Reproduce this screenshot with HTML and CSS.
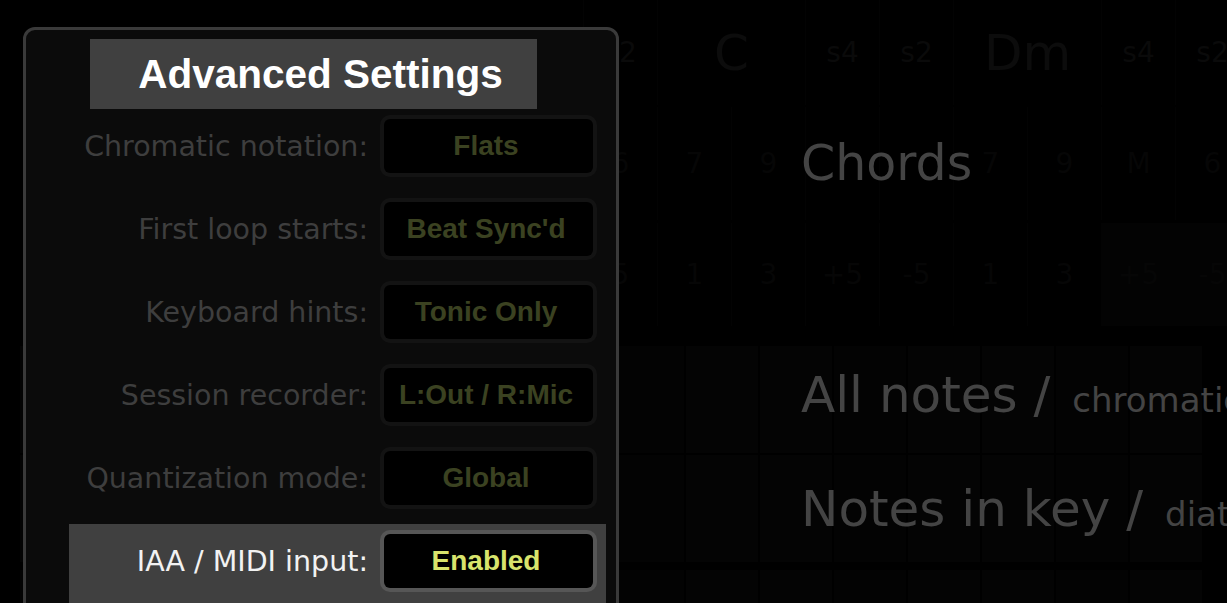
FILE: index.html
```html
<!DOCTYPE html>
<html lang="en">
<head>
  <meta charset="UTF-8">
  <title>Advanced Settings</title>
  <link rel="stylesheet" href="styles.css">
</head>
<body>
  <div class="board">
    <div class="row row-top">
      <div class="chord-cells">
        <span class="cell">s2</span>
        <span class="cell wide">C</span>
        <span class="cell">s4</span>
        <span class="cell">s2</span>
        <span class="cell wide">Dm</span>
        <span class="cell">s4</span>
        <span class="cell">s2</span>
      </div>
    </div>
    <div class="row row-mid">
      <div class="chord-cells">
        <span class="cell">6</span>
        <span class="cell">7</span>
        <span class="cell">9</span>
        <span class="cell"></span>
        <span class="cell"></span>
        <span class="cell">7</span>
        <span class="cell">9</span>
        <span class="cell">M</span>
        <span class="cell">6</span>
      </div>
      <div class="row-title">Chords</div>
    </div>
    <div class="row row-low">
      <div class="chord-cells">
        <span class="cell">5</span>
        <span class="cell">1</span>
        <span class="cell">3</span>
        <span class="cell">+5</span>
        <span class="cell">-5</span>
        <span class="cell">1</span>
        <span class="cell">3</span>
        <span class="cell lit">+5</span>
        <span class="cell lit">-5</span>
      </div>
    </div>

    <div class="row row-notes first">
      <div class="note-cells">
        <span></span><span></span><span></span><span></span><span></span><span></span><span></span><span></span><span></span><span></span><span></span><span></span><span></span><span></span><span></span><span></span>
      </div>
      <div class="row-title">All notes /<span class="sub">chromatic</span></div>
    </div>
    <div class="row row-notes">
      <div class="note-cells">
        <span></span><span></span><span></span><span></span><span></span><span></span><span></span><span></span><span></span><span></span><span></span><span></span><span></span><span></span><span></span><span></span>
      </div>
      <div class="row-title">Notes in key /<span class="sub">diatonic</span></div>
    </div>
    <div class="row row-notes last">
      <div class="note-cells">
        <span></span><span></span><span></span><span></span><span></span><span></span><span></span><span></span><span></span><span></span><span></span><span></span><span></span><span></span><span></span><span></span>
      </div>
      <div class="row-title">Notes in scale /<span class="sub">modal</span></div>
    </div>
  </div>

  <div class="settings">
    <div class="settings-title">Advanced Settings</div>

    <div class="setting">
      <span class="setting-label">Chromatic notation:</span>
      <span class="setting-value">Flats</span>
    </div>
    <div class="setting">
      <span class="setting-label">First loop starts:</span>
      <span class="setting-value">Beat Sync'd</span>
    </div>
    <div class="setting">
      <span class="setting-label">Keyboard hints:</span>
      <span class="setting-value">Tonic Only</span>
    </div>
    <div class="setting">
      <span class="setting-label">Session recorder:</span>
      <span class="setting-value">L:Out / R:Mic</span>
    </div>
    <div class="setting">
      <span class="setting-label">Quantization mode:</span>
      <span class="setting-value">Global</span>
    </div>
    <div class="setting active">
      <span class="setting-label">IAA / MIDI input:</span>
      <span class="setting-value">Enabled</span>
    </div>
  </div>
</body>
</html>
```

FILE: styles.css
```css
* { box-sizing: border-box; margin: 0; padding: 0; }
body {
  width: 1227px;
  height: 603px;
  overflow: hidden;
  background: #000;
  font-family: 'DejaVu Sans', sans-serif;
  position: relative;
}

/* background chord board, dimmed behind the panel */
.board {
  display: flex;
  flex-direction: column;
  gap: 2px;
}
.row {
  display: grid;
  align-items: center;
}
.row > * { grid-area: 1 / 1; }
.row-top { height: 105px; }
.row-mid { height: 113px; }
.row-low { height: 103px; margin-top: 1px; }
.row-notes { height: 107px; }
.row-notes.first { margin-top: 18px; }
.row-notes.last { margin-top: 6px; }

.chord-cells {
  display: flex;
  height: 100%;
  padding-left: 583px;
}
.cell {
  width: 74px;
  flex-shrink: 0;
  display: flex;
  align-items: center;
  justify-content: center;
  border-left: 1px solid #030303;
  color: #0a0a0a;
  font-size: 28px;
}
.cell.wide { width: 148px; font-size: 50px; color: #0c0c0c; }
.row-mid .cell, .row-low .cell { color: #060606; }
.cell.lit { background: #030303; }

.note-cells {
  display: flex;
  height: 100%;
  gap: 2px;
  padding-left: 20px;
}
.note-cells span {
  width: 72px;
  flex-shrink: 0;
  background: #040404;
}
.note-cells span:nth-child(3n) { background: #030303; }

.row-title {
  padding-left: 801px;
  font-size: 49px;
  color: #444;
  white-space: nowrap;
  align-self: center;
}
.row-notes .row-title { font-size: 50px; margin-top: -10px; }
.row-notes + .row-notes .row-title { margin-top: 0; }
.row-title .sub {
  font-size: 34px;
  margin-left: 22px;
}

/* settings panel, floats over the board */
.settings {
  position: absolute;
  left: 23px;
  top: 27px;
  width: 596px;
  height: 620px;
  background: #0b0b0b;
  border: 3px solid #3a3a3a;
  border-radius: 12px;
}
.settings-title {
  margin: 9px 0 0 64px;
  width: 447px;
  height: 70px;
  background: #404040;
  color: #fff;
  font-family: 'Liberation Sans', Arial, sans-serif;
  font-weight: bold;
  font-size: 40.5px;
  display: flex;
  align-items: center;
  justify-content: center;
  padding-left: 14px;
}
.setting {
  margin: 0 10px 0 43px;
  height: 83px;
  padding: 10px 13px 19px 0;
  display: flex;
  align-items: center;
  gap: 16px;
}
.setting-label {
  flex: 1;
  text-align: right;
  font-size: 28.5px;
  color: #3e3e3e;
  white-space: nowrap;
}
.setting-value {
  width: 209px;
  height: 54px;
  flex-shrink: 0;
  display: flex;
  align-items: center;
  justify-content: center;
  padding-right: 5px;
  background: #000;
  border-radius: 6px;
  box-shadow: 0 0 0 4px #131313;
  font-family: 'Liberation Sans', Arial, sans-serif;
  font-weight: bold;
  font-size: 28px;
  line-height: 1;
  color: #3b4221;
}
.setting.active { background: #404040; }
.setting.active .setting-label { color: #f2f2f2; }
.setting.active .setting-value {
  color: #d8e46c;
  box-shadow: 0 0 0 4px #565656;
}
```
